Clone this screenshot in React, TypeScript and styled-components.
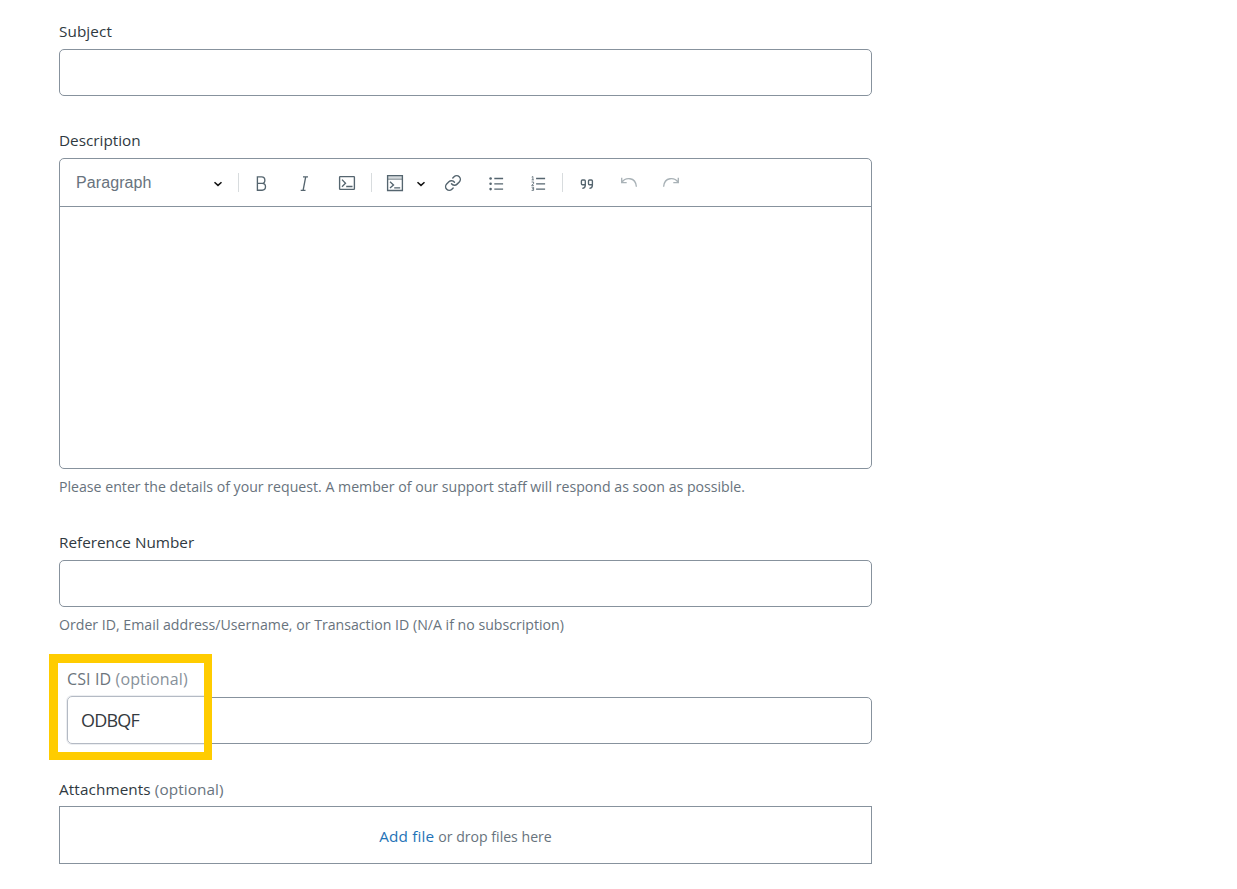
import React from 'react';
import styled, { createGlobalStyle } from 'styled-components';

const Global = createGlobalStyle`
  * { box-sizing: border-box; }
  body { margin: 0; background: #fff; font-family: 'Open Sans', 'Noto Sans', sans-serif; }
`;

const Form = styled.form`
  width: 813px;
  margin-left: 59px;
  padding-top: 21px;
  color: #2f3941;
`;

const Field = styled.div<{ $gap?: number; $top?: number }>`
  position: relative;
  display: flex;
  flex-direction: column;
  padding-top: ${p => p.$top ?? 0}px;
  margin-bottom: ${p => p.$gap ?? 0}px;
`;

const Label = styled.label<{ $track?: number; $gap?: number }>`
  height: 20px;
  margin-bottom: ${p => p.$gap ?? 8}px;
  font-size: 15.3px;
  line-height: 20px;
  letter-spacing: ${p => p.$track ?? 0}px;
  white-space: pre;
`;

const Muted = styled.span`
  color: #68737d;
`;

const Input = styled.input`
  width: 100%;
  height: 47px;
  padding: 0 13px;
  border: 1px solid #87929d;
  border-radius: 5px;
  outline: 0;
  background: #fff;
`;

const Hint = styled.p`
  height: 20px;
  margin: 8px 0 0;
  color: #68737d;
  font-size: 14.15px;
  line-height: 20px;
  white-space: nowrap;
`;

const Editor = styled.div`
  height: 311px;
  border: 1px solid #87929d;
  border-radius: 5px;
`;

const Toolbar = styled.div`
  display: flex;
  align-items: center;
  height: 48px;
  border-bottom: 1px solid #87929d;
`;

const StyleSelect = styled.div`
  display: flex;
  align-items: center;
  justify-content: space-between;
  width: 178px;
  padding: 0 15px 0 16px;
  color: #68737d;
  font: 16px/20px 'Liberation Sans', sans-serif;
  letter-spacing: 0.1px;
`;

const Divider = styled.i<{ $before?: number }>`
  flex: none;
  width: 1px;
  height: 19px;
  margin-left: ${p => p.$before ?? 0}px;
  background: #d8dcde;
`;

const Tool = styled.button.attrs({ type: 'button' })<{ $w: number; $off?: boolean }>`
  display: flex;
  flex: none;
  align-items: center;
  justify-content: center;
  width: ${p => p.$w}px;
  height: 40px;
  padding: 3px 0 0;
  border: 0;
  background: none;
  color: ${p => (p.$off ? '#a9b2b7' : '#55656f')};
`;

const SplitTool = styled(Tool)`
  justify-content: flex-start;
  gap: 11px;
  padding-left: 13px;
  margin-right: 6px;
`;

const Glyph = styled.svg.attrs({ viewBox: '0 0 20 20' })`
  display: block;
  flex: none;
  width: 20px;
  height: 20px;
  fill: none;
  stroke: currentColor;
  stroke-width: 1.35;
`;

const Caret = styled.svg`
  display: block;
  flex: none;
  width: 10px;
  height: 8px;
  margin-top: 2px;
  fill: none;
  stroke: #111;
  stroke-width: 1.5;
`;

const SplitCaret = styled(Caret)`
  margin-top: 0;
`;

const Highlight = styled.div`
  position: absolute;
  left: -10px;
  top: -15px;
  width: 163px;
  height: 106px;
  padding: 6px 0 0 9px;
  overflow: hidden;
  border: solid #ffcc00;
  border-width: 9px 8px 8px 9px;
  background: #fff;
`;

const HighlightLabel = styled.div`
  height: 20px;
  margin-bottom: 7px;
  color: #6c757d;
  font-size: 16px;
  line-height: 20px;
  letter-spacing: 0.12px;
  white-space: pre;
`;

const HighlightMuted = styled.span`
  color: #87919a;
`;

const Value = styled.div`
  width: 180px;
  height: 48px;
  padding-left: 13px;
  border: 1px solid #b4bac4;
  border-radius: 5px;
  box-shadow: 0 0 0 1px #eceef1;
  color: #343a40;
  font-size: 18px;
  line-height: 47px;
  letter-spacing: -0.8px;
`;

const Dropzone = styled.div`
  display: flex;
  align-items: baseline;
  justify-content: center;
  gap: 4px;
  height: 58px;
  padding-top: 19px;
  border: 1px solid #87929d;
  color: #68737d;
  font-size: 14.1px;
  line-height: 20px;
`;

const AddFile = styled.span`
  color: #1f73b7;
  font-size: 15.3px;
  letter-spacing: 0.15px;
`;

const CARET = 'M1.5 2.2 5 5.4 8.5 2.2';

export default function App() {
  return (
    <>
      <Global />
      <Form>
        <Field $gap={34}>
          <Label $track={0.08}>Subject</Label>
          <Input />
        </Field>

        <Field $gap={35}>
          <Label>Description</Label>
          <Editor>
            <Toolbar>
              <StyleSelect>
                Paragraph
                <Caret viewBox="0 0 10 8"><path d={CARET} /></Caret>
              </StyleSelect>
              <Divider />
              <Tool $w={44} aria-label="Bold">
                <Glyph><path d="M6.4 2.9h4.2a3.2 3.2 0 0 1 0 6.5H6.4zM6.4 9.4h4.7a3.4 3.4 0 0 1 0 6.8H6.4z" /></Glyph>
              </Tool>
              <Tool $w={42} aria-label="Italic">
                <Glyph><path d="M9 2.9h5M6.7 16.3h4.8M11.7 2.9 9.1 16.3" /></Glyph>
              </Tool>
              <Tool $w={44} aria-label="Code">
                <Glyph>
                  <rect x="2.6" y="2.6" width="14.8" height="12.8" rx=".6" />
                  <path d="m5 5.6 3.5 3.6L5 12.8M9.2 12.5h6.3" />
                </Glyph>
              </Tool>
              <Divider $before={2} />
              <SplitTool $w={54} aria-label="Code block">
                <Glyph>
                  <path d="M2.6 1.6h14.8v3.2H2.6z" fill="#d5dadd" stroke="none" />
                  <path d="M2.6 1.6h14.8v14.9H2.6zM5 7.8l3.5 3.1L5 14M9.2 13.8h6" />
                  <path d="M2.6 5.2h14.8" strokeWidth=".8" />
                </Glyph>
                <SplitCaret viewBox="0 0 10 8"><path d={CARET} /></SplitCaret>
              </SplitTool>
              <Tool $w={42} aria-label="Link">
                <Glyph>
                  <g transform="translate(1.1 .1) scale(.74)" strokeWidth="1.95" strokeLinecap="round">
                    <path d="M10 13a5 5 0 0 0 7.54.54l3-3a5 5 0 0 0-7.07-7.07l-1.72 1.71" />
                    <path d="M14 11a5 5 0 0 0-7.54-.54l-3 3a5 5 0 0 0 7.07 7.07l1.71-1.71" />
                  </g>
                </Glyph>
              </Tool>
              <Tool $w={44} aria-label="Bulleted list">
                <Glyph>
                  <path d="M8.3 4.5h8.8M8.3 9.8h8.8M8.3 15.1h8.8" />
                  <g fill="currentColor" stroke="none">
                    <circle cx="4.6" cy="4.5" r="1.3" />
                    <circle cx="4.6" cy="9.8" r="1.3" />
                    <circle cx="4.6" cy="15.1" r="1.3" />
                  </g>
                </Glyph>
              </Tool>
              <Tool $w={40} aria-label="Numbered list">
                <Glyph>
                  <path d="M8.1 4.5h9M8.1 9.8h9M8.1 15.1h9" />
                  <path strokeWidth=".8" d="M3.7 3.1 4.9 2.5v3.4M3.6 5.9h2.3M3.6 8h2v1.6l-2 1.8h2.3M3.6 13.2h2v3.2h-2M4 14.8h1.6" />
                </Glyph>
              </Tool>
              <Divider $before={4} />
              <Tool $w={48} aria-label="Quote">
                <Glyph strokeWidth="1.5">
                  <path d="M8.3 10.7H5.4a1 1 0 0 1-1-1V7a1 1 0 0 1 1-1h1.9a1 1 0 0 1 1 1v4.2c0 1.9-1.1 3-3 3.1M15.4 10.7h-2.9a1 1 0 0 1-1-1V7a1 1 0 0 1 1-1h1.9a1 1 0 0 1 1 1v4.2c0 1.9-1.1 3-3 3.1" />
                </Glyph>
              </Tool>
              <Tool $w={36} $off aria-label="Undo">
                <Glyph><path d="M2.7 3.8v4.8h5M2.9 8.3c3.2-5 13.6-6 14.5 4.4" /></Glyph>
              </Tool>
              <Tool $w={48} $off aria-label="Redo">
                <Glyph><path d="M17.3 3.8v4.8h-5M17.1 8.3c-3.2-5-13.6-6-14.5 4.4" /></Glyph>
              </Tool>
            </Toolbar>
          </Editor>
          <Hint>Please enter the details of your request. A member of our support staff will respond as soon as possible.</Hint>
        </Field>

        <Field $gap={34}>
          <Label>Reference Number</Label>
          <Input />
          <Hint>Order ID, Email address/Username, or Transaction ID (N/A if no subscription)</Hint>
        </Field>

        <Field $gap={35} $top={28}>
          <Input />
          <Highlight>
            <HighlightLabel>CSI ID <HighlightMuted>(optional)</HighlightMuted></HighlightLabel>
            <Value>ODBQF</Value>
          </Highlight>
        </Field>

        <Field>
          <Label $gap={7} $track={0.1}>Attachments <Muted>(optional)</Muted></Label>
          <Dropzone>
            <AddFile>Add file</AddFile>
            <span>or drop files here</span>
          </Dropzone>
        </Field>
      </Form>
    </>
  );
}
